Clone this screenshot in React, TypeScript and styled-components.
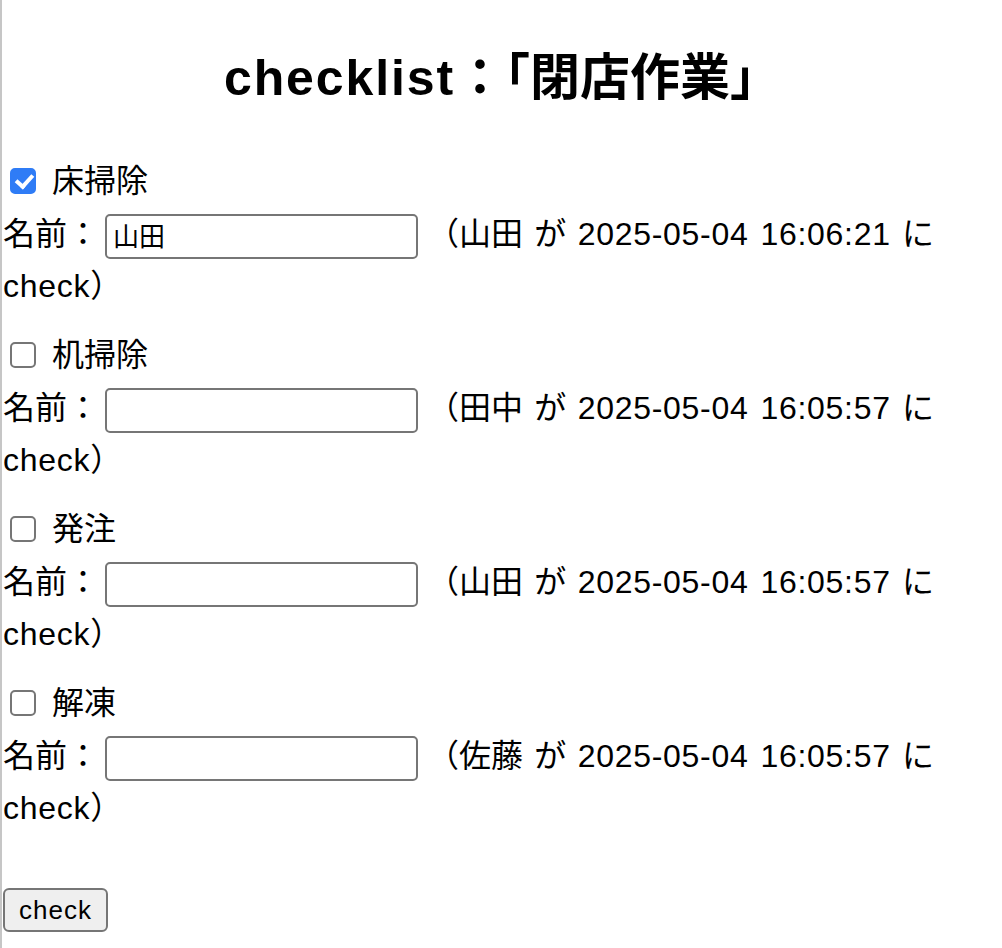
import React from "react";
import styled, { createGlobalStyle } from "styled-components";

const GlobalStyle = createGlobalStyle`
  html, body {
    margin: 0;
    padding: 0;
    background: #ffffff;
  }
  body {
    font-family: "Liberation Sans", "Noto Sans CJK JP", sans-serif;
    font-size: 32px;
    color: #000000;
  }
`;

const Page = styled.div`
  min-height: 948px;
  box-sizing: border-box;
  border-left: 2px solid #c6c6c6;
  padding: 50px 0 0 0;
`;

const Title = styled.h2`
  margin: 0 0 51px 0;
  text-align: center;
  font-size: 50px;
  line-height: 56px;
  font-weight: 700;
`;

const Latin = styled.span<{ $spacing?: number }>`
  letter-spacing: ${(p) => p.$spacing ?? 0.7}px;
`;

const Item = styled.div`
  margin-bottom: 19px;
`;

const CheckRow = styled.label`
  display: flex;
  align-items: center;
  height: 48px;
  line-height: 48px;
`;

const Box = styled.input.attrs({ type: "checkbox" })`
  appearance: none;
  -webkit-appearance: none;
  position: relative;
  box-sizing: border-box;
  width: 26px;
  height: 26px;
  margin: 0 16px 0 8px;
  border: 2px solid #767676;
  border-radius: 5px;
  background: #ffffff;
  cursor: pointer;

  &:checked {
    border-color: #2f7cf6;
    background: #2f7cf6;
  }
  &:checked::after {
    content: "";
    position: absolute;
    left: 6.5px;
    top: 0.5px;
    width: 7px;
    height: 13px;
    border: solid #ffffff;
    border-width: 0 4px 4px 0;
    transform: rotate(42deg);
  }
`;

const NameBlock = styled.div`
  padding-top: 3px;
  line-height: 52px;
  padding-left: 1px;
`;

const NameInput = styled.input.attrs({ type: "text" })`
  box-sizing: border-box;
  width: 313px;
  height: 45px;
  margin: 0 0 0 6px;
  padding: 0 6px 4px 6px;
  border: 2px solid #767676;
  border-radius: 5px;
  font-family: "Liberation Sans", "Noto Sans CJK JP", sans-serif;
  font-size: 26px;
  color: #000000;
  vertical-align: middle;
  outline: none;
`;

const Status = styled.span`
  word-spacing: 2.5px;
`;

const SubmitButton = styled.button`
  display: block;
  box-sizing: border-box;
  width: 105px;
  height: 44px;
  margin: 54px 0 0 1px;
  padding: 0;
  border: 2px solid #767676;
  border-radius: 6px;
  background: #efefef;
  font-family: "Liberation Sans", "Noto Sans CJK JP", sans-serif;
  font-size: 26px;
  letter-spacing: 1px;
  color: #000000;
  cursor: pointer;
`;

type Task = {
  label: string;
  checked: boolean;
  value: string;
  by: string;
  at: string;
};

const tasks: Task[] = [
  { label: "床掃除", checked: true, value: "山田", by: "山田", at: "2025-05-04 16:06:21" },
  { label: "机掃除", checked: false, value: "", by: "田中", at: "2025-05-04 16:05:57" },
  { label: "発注", checked: false, value: "", by: "山田", at: "2025-05-04 16:05:57" },
  { label: "解凍", checked: false, value: "", by: "佐藤", at: "2025-05-04 16:05:57" },
];

export default function App() {
  return (
    <>
      <GlobalStyle />
      <Page>
        <Title>
          <Latin $spacing={1.9}>checklist</Latin>：「閉店作業」
        </Title>
        {tasks.map((t) => (
          <Item key={t.label}>
            <CheckRow>
              <Box defaultChecked={t.checked} />
              {t.label}
            </CheckRow>
            <NameBlock>
              名前：<NameInput defaultValue={t.value} />{" "}
              <Status>
                （{t.by} が <Latin>{t.at}</Latin> に<Latin $spacing={0.75}>check</Latin>）
              </Status>
            </NameBlock>
          </Item>
        ))}
        <SubmitButton>check</SubmitButton>
      </Page>
    </>
  );
}
